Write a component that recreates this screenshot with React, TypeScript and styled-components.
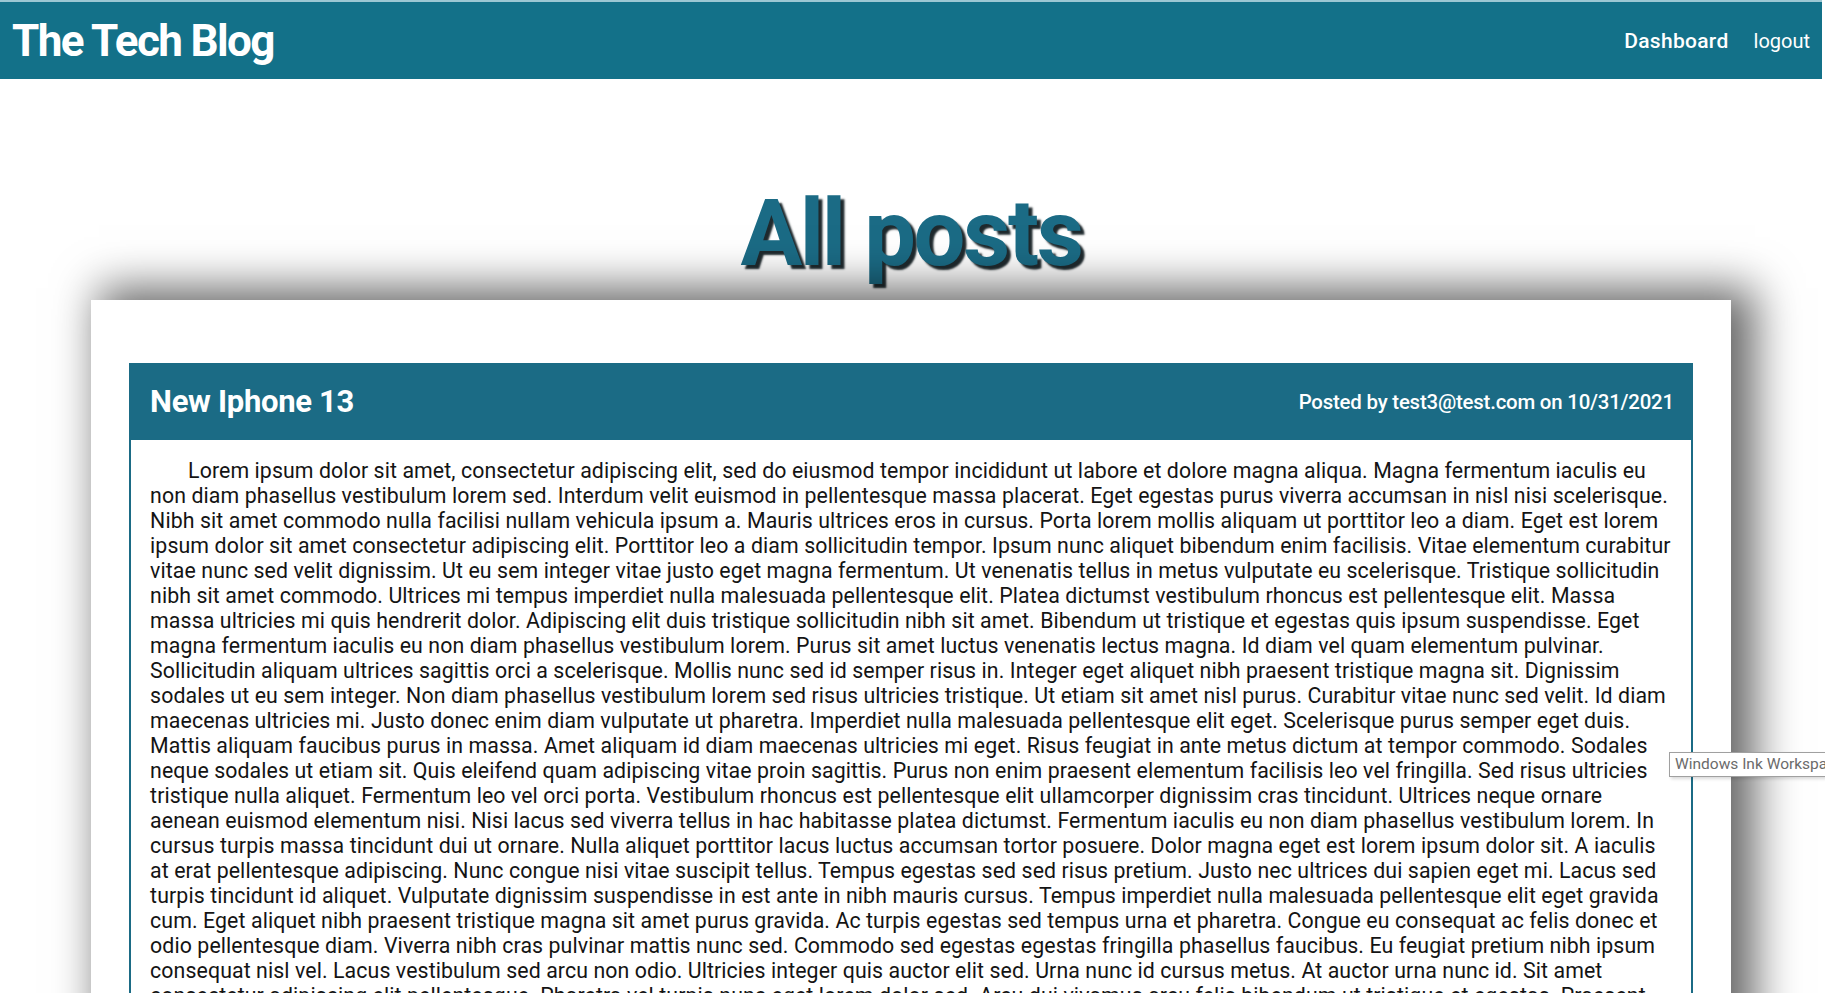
import React from "react";
import styled, { createGlobalStyle } from "styled-components";

const GlobalStyle = createGlobalStyle`
  html, body {
    margin: 0;
    padding: 0;
    background: #ffffff;
    overflow: hidden;
  }
  body {
    font-family: Roboto, "Liberation Sans", Arial, sans-serif;
  }
`;

const Page = styled.div`
  position: relative;
  min-height: 993px;
  margin-right: 3px;
`;

const Nav = styled.header`
  height: 79px;
  box-sizing: border-box;
  border-top: 2px solid #9cc7d3;
  background: #137189;
  display: flex;
  align-items: center;
  justify-content: space-between;
  padding: 0 12px 0 12px;
`;

const Brand = styled.h1`
  margin: 0;
  color: #ffffff;
  font-size: 44px;
  font-weight: 700;
  letter-spacing: -1.6px;
  line-height: 1;
`;

const NavLinks = styled.nav`
  display: flex;
  align-items: center;
  gap: 25px;
`;

const NavLink = styled.a<{ $strong?: boolean }>`
  color: #ffffff;
  font-size: ${(p) => (p.$strong ? "21px" : "20px")};
  font-weight: ${(p) => (p.$strong ? 500 : 400)};
  text-decoration: none;
  letter-spacing: ${(p) => (p.$strong ? "0.3px" : "0")};
`;

const Main = styled.main`
  display: flex;
  flex-direction: column;
  align-items: center;
`;

const PageTitle = styled.h2`
  margin: 109px 0 20px;
  color: #1b6b85;
  font-size: 92px;
  line-height: 92px;
  font-weight: 700;
  letter-spacing: -2.4px;
  text-shadow: 4px 4px 2px #1f2a2e;
`;

const Card = styled.section`
  width: 90%;
  box-sizing: border-box;
  background: #ffffff;
  padding: 63px 38px 40px;
  box-shadow: 16px -4px 42px 8px rgba(0, 0, 0, 0.6);
`;

const Post = styled.article`
  display: flex;
  flex-direction: column;
`;

const PostHeader = styled.div`
  height: 77px;
  box-sizing: border-box;
  background: #1b6b85;
  display: flex;
  align-items: center;
  justify-content: space-between;
  padding: 0 19px 0 21px;
`;

const PostTitle = styled.h3`
  margin: 0;
  color: #ffffff;
  font-size: 31px;
  font-weight: 700;
  letter-spacing: -0.3px;
`;

const PostMeta = styled.span`
  color: #ffffff;
  font-size: 20.4px;
  font-weight: 500;
  letter-spacing: -0.2px;
`;

const PostBody = styled.div`
  border: 2px solid #1b6b85;
  border-top: none;
  padding: 18px 19px 20px;
  color: #141414;
  font-size: 21.3px;
  letter-spacing: 0.1px;
  line-height: 25px;
  white-space: nowrap;
`;

const Paragraph = styled.p`
  margin: 0;
  text-indent: 38px;
`;

const Tooltip = styled.div`
  position: absolute;
  left: 1669px;
  top: 752px;
  right: -3px;
  height: 25px;
  box-sizing: border-box;
  overflow: hidden;
  white-space: nowrap;
  background: #ffffff;
  border: 1px solid #a0a0a0;
  border-right: none;
  box-shadow: 2px 2px 3px rgba(0, 0, 0, 0.15);
  color: #6b6b6b;
  font-family: Roboto, "Liberation Sans", sans-serif;
  font-size: 15.5px;
  line-height: 23px;
  padding-left: 5px;
`;

const lines = [
  "Lorem ipsum dolor sit amet, consectetur adipiscing elit, sed do eiusmod tempor incididunt ut labore et dolore magna aliqua. Magna fermentum iaculis eu",
  "non diam phasellus vestibulum lorem sed. Interdum velit euismod in pellentesque massa placerat. Eget egestas purus viverra accumsan in nisl nisi scelerisque.",
  "Nibh sit amet commodo nulla facilisi nullam vehicula ipsum a. Mauris ultrices eros in cursus. Porta lorem mollis aliquam ut porttitor leo a diam. Eget est lorem",
  "ipsum dolor sit amet consectetur adipiscing elit. Porttitor leo a diam sollicitudin tempor. Ipsum nunc aliquet bibendum enim facilisis. Vitae elementum curabitur",
  "vitae nunc sed velit dignissim. Ut eu sem integer vitae justo eget magna fermentum. Ut venenatis tellus in metus vulputate eu scelerisque. Tristique sollicitudin",
  "nibh sit amet commodo. Ultrices mi tempus imperdiet nulla malesuada pellentesque elit. Platea dictumst vestibulum rhoncus est pellentesque elit. Massa",
  "massa ultricies mi quis hendrerit dolor. Adipiscing elit duis tristique sollicitudin nibh sit amet. Bibendum ut tristique et egestas quis ipsum suspendisse. Eget",
  "magna fermentum iaculis eu non diam phasellus vestibulum lorem. Purus sit amet luctus venenatis lectus magna. Id diam vel quam elementum pulvinar.",
  "Sollicitudin aliquam ultrices sagittis orci a scelerisque. Mollis nunc sed id semper risus in. Integer eget aliquet nibh praesent tristique magna sit. Dignissim",
  "sodales ut eu sem integer. Non diam phasellus vestibulum lorem sed risus ultricies tristique. Ut etiam sit amet nisl purus. Curabitur vitae nunc sed velit. Id diam",
  "maecenas ultricies mi. Justo donec enim diam vulputate ut pharetra. Imperdiet nulla malesuada pellentesque elit eget. Scelerisque purus semper eget duis.",
  "Mattis aliquam faucibus purus in massa. Amet aliquam id diam maecenas ultricies mi eget. Risus feugiat in ante metus dictum at tempor commodo. Sodales",
  "neque sodales ut etiam sit. Quis eleifend quam adipiscing vitae proin sagittis. Purus non enim praesent elementum facilisis leo vel fringilla. Sed risus ultricies",
  "tristique nulla aliquet. Fermentum leo vel orci porta. Vestibulum rhoncus est pellentesque elit ullamcorper dignissim cras tincidunt. Ultrices neque ornare",
  "aenean euismod elementum nisi. Nisi lacus sed viverra tellus in hac habitasse platea dictumst. Fermentum iaculis eu non diam phasellus vestibulum lorem. In",
  "cursus turpis massa tincidunt dui ut ornare. Nulla aliquet porttitor lacus luctus accumsan tortor posuere. Dolor magna eget est lorem ipsum dolor sit. A iaculis",
  "at erat pellentesque adipiscing. Nunc congue nisi vitae suscipit tellus. Tempus egestas sed sed risus pretium. Justo nec ultrices dui sapien eget mi. Lacus sed",
  "turpis tincidunt id aliquet. Vulputate dignissim suspendisse in est ante in nibh mauris cursus. Tempus imperdiet nulla malesuada pellentesque elit eget gravida",
  "cum. Eget aliquet nibh praesent tristique magna sit amet purus gravida. Ac turpis egestas sed tempus urna et pharetra. Congue eu consequat ac felis donec et",
  "odio pellentesque diam. Viverra nibh cras pulvinar mattis nunc sed. Commodo sed egestas egestas fringilla phasellus faucibus. Eu feugiat pretium nibh ipsum",
  "consequat nisl vel. Lacus vestibulum sed arcu non odio. Ultricies integer quis auctor elit sed. Urna nunc id cursus metus. At auctor urna nunc id. Sit amet",
  "consectetur adipiscing elit pellentesque. Pharetra vel turpis nunc eget lorem dolor sed. Arcu dui vivamus arcu felis bibendum ut tristique et egestas. Praesent",
];

export default function App() {
  return (
    <Page>
      <GlobalStyle />
      <Nav>
        <Brand>The Tech Blog</Brand>
        <NavLinks>
          <NavLink href="#" $strong>
            Dashboard
          </NavLink>
          <NavLink href="#">logout</NavLink>
        </NavLinks>
      </Nav>
      <Main>
        <PageTitle>All posts</PageTitle>
        <Card>
          <Post>
            <PostHeader>
              <PostTitle>New Iphone 13</PostTitle>
              <PostMeta>Posted by test3@test.com on 10/31/2021</PostMeta>
            </PostHeader>
            <PostBody>
              <Paragraph>
                {lines.map((line, i) => (
                  <React.Fragment key={i}>
                    {line}
                    {i < lines.length - 1 && <br />}
                  </React.Fragment>
                ))}
              </Paragraph>
            </PostBody>
          </Post>
        </Card>
      </Main>
      <Tooltip>Windows Ink Workspace</Tooltip>
    </Page>
  );
}
